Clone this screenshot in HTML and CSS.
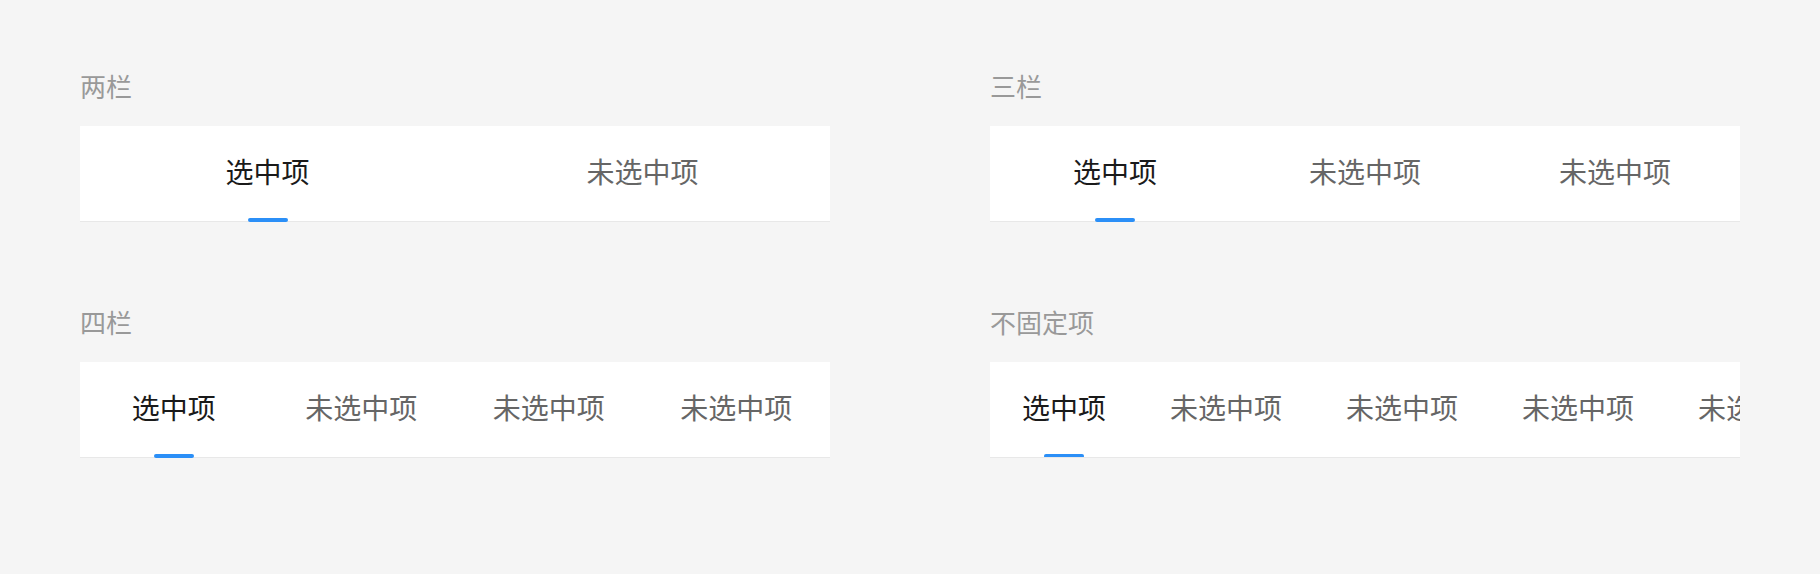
FILE: index.html
```html
<!DOCTYPE html>
<html lang="zh-CN">
<head>
    <meta charset="UTF-8">
    <meta name="viewport" content="width=device-width, initial-scale=1.0">
    <title>Tabs</title>
    <link rel="stylesheet" href="styles.css">
</head>
<body>
    <div class="demo-grid">
        <!-- 两栏 -->
        <div class="demo">
            <div class="demo-title">两栏</div>
            <div class="tabs">
                <div class="tab active">选中项</div>
                <div class="tab">未选中项</div>
            </div>
        </div>

        <!-- 三栏 -->
        <div class="demo">
            <div class="demo-title">三栏</div>
            <div class="tabs">
                <div class="tab active">选中项</div>
                <div class="tab">未选中项</div>
                <div class="tab">未选中项</div>
            </div>
        </div>

        <!-- 四栏 -->
        <div class="demo">
            <div class="demo-title">四栏</div>
            <div class="tabs">
                <div class="tab active">选中项</div>
                <div class="tab">未选中项</div>
                <div class="tab">未选中项</div>
                <div class="tab">未选中项</div>
            </div>
        </div>

        <!-- 不固定项: the last item runs past the edge and is clipped -->
        <div class="demo">
            <div class="demo-title">不固定项</div>
            <div class="tabs scroll">
                <div class="tab active">选中项</div>
                <div class="tab">未选中项</div>
                <div class="tab">未选中项</div>
                <div class="tab">未选中项</div>
                <div class="tab">未选中项</div>
            </div>
        </div>
    </div>
</body>
</html>
```

FILE: styles.css
```css
body {
    margin: 0;
    padding: 73px 80px 0;
    background: #f5f5f5;
    font-family: "Noto Sans CJK SC", "Noto Sans", sans-serif;
}
.demo-grid {
    display: grid;
    grid-template-columns: 750px 750px;
    column-gap: 160px;
    row-gap: 87px;
}
.demo-title {
    font-size: 26px;
    line-height: 26px;
    color: #999;
    margin-bottom: 27px;
}
.tabs {
    display: flex;
    height: 95px;
    background: #fff;
    border-bottom: 1px solid #e8e8e8;
}
.tab {
    position: relative;
    flex: 1;
    display: flex;
    align-items: center;
    justify-content: center;
    padding-bottom: 5px;
    box-sizing: border-box;
    font-size: 28px;
    line-height: 28px;
    color: #666;
    white-space: nowrap;
}
.tab.active {
    color: #1a1a1a;
}
.tab.active::after {
    content: "";
    position: absolute;
    left: 50%;
    bottom: -1px;
    width: 40px;
    height: 4px;
    margin-left: -20px;
    border-radius: 2px;
    background: #2b8ff7;
}
.tabs.scroll {
    overflow: hidden;
}
.tabs.scroll .tab {
    flex: none;
    padding: 0 32px 5px;
}
```
